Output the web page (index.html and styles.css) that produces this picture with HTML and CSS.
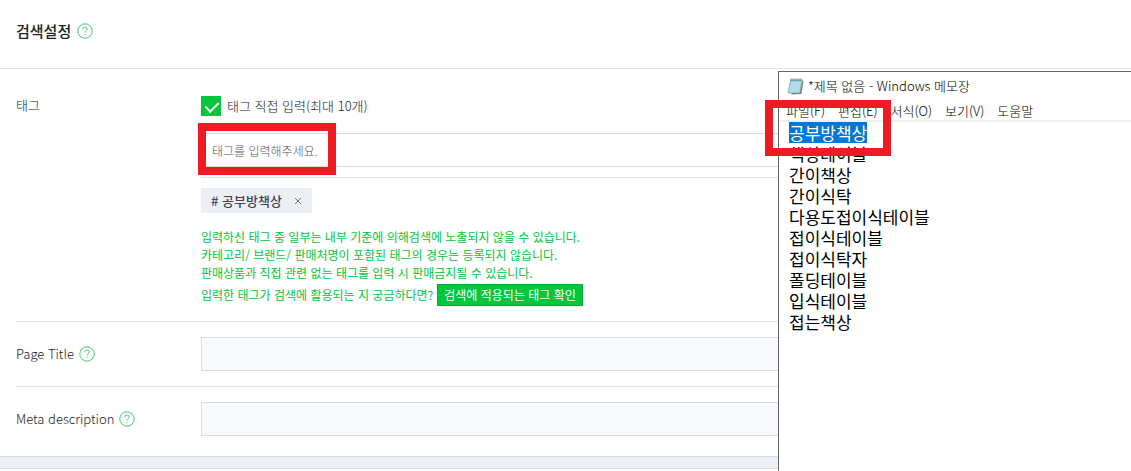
FILE: index.html
```html
<!DOCTYPE html>
<html lang="ko">
<head>
<meta charset="utf-8">
<title>검색설정</title>
<link rel="stylesheet" href="styles.css">
</head>
<body>
<svg class="defs" aria-hidden="true">
  <symbol id="help" viewBox="0 0 16 16">
    <circle cx="8" cy="8" r="7.200" fill="none" stroke="currentColor" stroke-width=".9"/>
    <path d="M5.700 6.300C5.700 3.500 10.300 3.500 10.200 6.100C10.100 7.600 8 7.700 8 9.600M8 10.900V12.100" fill="none" stroke="currentColor" stroke-width=".9"/>
  </symbol>
</svg>
<main class="panel">
  <header class="panel-head">
    <h1 class="title">검색설정</h1>
    <button class="help" type="button" aria-label="검색설정 도움말"><svg><use href="#help"/></svg></button>
  </header>
  <section class="row row-tags">
    <div class="label">태그</div>
    <div class="field">
      <label class="check"><input class="check-box" type="checkbox" checked><span>태그 직접 입력(최대 10개)</span></label>
      <div class="tag-entry">
        <input class="tag-input" type="text" placeholder="태그를 입력해주세요." aria-label="태그 입력">
        <span class="mark mark-input"></span>
      </div>
      <div class="tag-list">
        <span class="tag"># 공부방책상<button class="tag-remove" type="button" aria-label="삭제"><svg viewBox="0 0 8 8"><path d="M1 1L7 7M7 1L1 7" fill="none" stroke="currentColor"/></svg></button></span>
      </div>
      <div class="notes">
        <p>입력하신 태그 중 일부는 내부 기준에 의해검색에 노출되지 않을 수 있습니다.</p>
        <p>카테고리/ 브랜드/ 판매처명이 포함된 태그의 경우는 등록되지 않습니다.</p>
        <p>판매상품과 직접 관련 없는 태그를 입력 시 판매금지될 수 있습니다.</p>
        <p class="ask"><span>입력한 태그가 검색에 활용되는 지 궁금하다면?</span><button class="verify" type="button">검색에 적용되는 태그 확인</button></p>
      </div>
    </div>
  </section>
  <section class="row">
    <div class="label"><label for="page-title">Page Title</label><button class="help" type="button" aria-label="Page Title 도움말"><svg><use href="#help"/></svg></button></div>
    <input class="text-input" id="page-title" type="text">
  </section>
  <section class="row row-last">
    <div class="label"><label for="meta">Meta description</label><button class="help" type="button" aria-label="Meta description 도움말"><svg><use href="#help"/></svg></button></div>
    <input class="text-input" id="meta" type="text">
  </section>
</main>
<aside class="notepad">
  <div class="caption">
    <svg class="note-icon" viewBox="0 0 16 17">
      <path d="M4 3H16L14 16L4 16.500Z" fill="#8a8377"/>
      <path d="M3 2H15L12.500 15H.5Z" fill="#9bd3e2" stroke="#6a9aa8" stroke-width=".6"/>
      <path d="M3.500 5H13M3 7H12.600M2.600 9H12.200M2.200 11H11.800M1.800 13H11.400" stroke="#d7f2f8" stroke-width=".7"/>
      <path d="M3.500 .5V3M5.500 .5V3M7.500 .5V3M9.500 .5V3M11.500 .5V3M13.500 .5V3" stroke="#777"/>
    </svg>
    <span>*제목 없음 - Windows 메모장</span>
  </div>
  <nav class="menu">
    <button type="button">파일(F)</button><button type="button">편집(E)</button><button type="button">서식(O)</button><button type="button">보기(V)</button><button type="button">도움말</button>
  </nav>
  <div class="document">
    <div><span class="selected">공부방책상</span></div>
    <div>책상테이블</div>
    <div>간이책상</div>
    <div>간이식탁</div>
    <div>다용도접이식테이블</div>
    <div>접이식테이블</div>
    <div>접이식탁자</div>
    <div>폴딩테이블</div>
    <div>입식테이블</div>
    <div>접는책상</div>
  </div>
  <span class="mark mark-document"></span>
</aside>
</body>
</html>
```
FILE: styles.css
```css
* { box-sizing: border-box; }
body {
  margin: 0;
  min-height: 100vh;
  overflow: hidden;
  background: #fff;
  color: #202028;
  font-family: "Noto Sans CJK KR", sans-serif;
  font-size: 13px;
  font-weight: 300;
  line-height: 18px;
}
button, input { font: inherit; color: inherit; }
button { margin: 0; padding: 0; border: 0; background: none; }
p { margin: 0; }
.defs { position: absolute; width: 0; height: 0; }
.panel { border-bottom: 1px solid #d8dbe2; }
.panel::after {
  content: "";
  display: block;
  height: 11px;
  border-top: 1px solid #d8dbe2;
  background: #eceff4;
}
.panel-head {
  display: flex;
  align-items: center;
  gap: 6px;
  padding: 19px 16px 25px;
  border-bottom: 1px solid #dfe3ec;
}
.title { margin: 0; font-size: 15px; line-height: 24px; font-weight: 500; }
.help { display: flex; color: #2ec45f; }
.help svg { width: 16px; height: 16px; }
.row {
  display: grid;
  grid-template-columns: 185px 1fr;
  align-items: center;
  margin-left: 16px;
  padding: 15px 0;
  border-bottom: 1px solid #dfe3ec;
}
.row-tags { align-items: start; padding: 27px 0 15px; }
.row-last { padding-bottom: 20px; border-bottom: 0; }
.label { display: flex; align-items: center; gap: 5px; }
.check { display: flex; align-items: center; gap: 6px; height: 20px; }
.check-box {
  appearance: none;
  width: 20px;
  height: 20px;
  margin: 0;
  background: #00c73c;
}
.check-box:checked::before {
  content: "";
  display: block;
  width: 6px;
  height: 11px;
  margin: 3px 7px;
  border: solid #fff;
  border-width: 0 2px 2px 0;
  transform: rotate(45deg);
}
.tag-entry {
  position: relative;
  margin-top: 17px;
  padding-bottom: 10px;
  border-bottom: 1px solid #dfe3ec;
}
.tag-input {
  display: block;
  width: 100%;
  height: 34px;
  padding: 0 10px;
  border: 1px solid #d8dbe2;
  font-size: 12px;
}
.tag-input::placeholder { color: #555; opacity: 1; }
.mark { position: absolute; border: 8px solid #ed1c24; }
.mark-input { left: -3px; top: -10px; width: 138px; height: 52px; }
.tag-list { display: flex; margin-top: 10px; }
.tag {
  display: flex;
  align-items: center;
  gap: 12px;
  height: 25px;
  padding: 0 10px;
  background: #eceff4;
  color: #43434d;
  font-weight: 500;
}
.tag-remove { color: #777; }
.tag-remove svg { display: block; width: 8px; height: 8px; }
.notes { margin-top: 15px; color: #00c73c; font-size: 12px; font-weight: 400; }
.ask { display: flex; align-items: center; gap: 4px; margin-top: 2px; }
.verify {
  height: 22px;
  padding: 0 6px;
  border: 1px solid #00ac34;
  background: #00c73c;
  color: #fff;
  line-height: 20px;
}
.text-input {
  width: 100%;
  height: 34px;
  padding: 0 10px;
  border: 1px solid #d8dbe2;
  background: #f8f9fd;
}
.notepad {
  position: absolute;
  left: 778px;
  right: 0;
  top: 71px;
  bottom: 0;
  border: solid #666;
  border-width: 1px 0 0 1px;
  background: #fff;
  color: #000;
}
.caption {
  display: flex;
  align-items: center;
  gap: 4px;
  height: 28px;
  padding-left: 8px;
}
.note-icon { width: 17px; height: 17px; }
.menu {
  display: flex;
  gap: 13px;
  height: 22px;
  padding: 2px 0 0 7px;
  border-bottom: 2px solid #f0f0f0;
}
.document { padding-left: 10px; font-size: 17px; font-weight: 400; line-height: 21px; }
.selected { display: inline-block; background: #0078d7; color: #fff; }
.mark-document { left: -14px; top: 28px; width: 126px; height: 56px; }
```
